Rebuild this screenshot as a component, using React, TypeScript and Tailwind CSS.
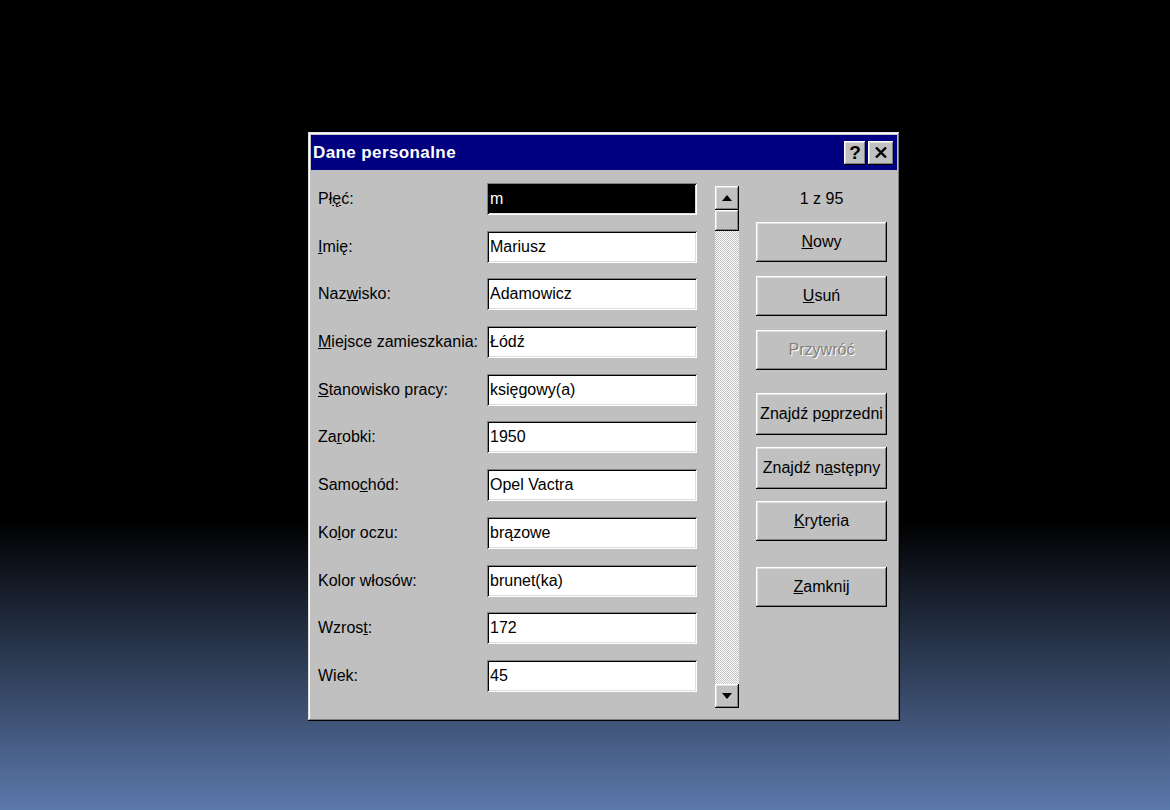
import React from "react";

const FONT = "font-['Liberation_Sans',Arial,sans-serif]";
const RAISED =
  "shadow-[inset_-1px_-1px_#000,inset_1px_1px_#fff,inset_-2px_-2px_#808080,inset_2px_2px_#dfdfdf]";
const SUNKEN =
  "shadow-[inset_1px_1px_#808080,inset_-1px_-1px_#fff,inset_2px_2px_#000,inset_-2px_-2px_#dfdfdf]";

type Row = { label: React.ReactNode; value: string; selected?: boolean };

const ROWS: Row[] = [
  { label: <>Pł<u>ę</u>ć:</>, value: "m", selected: true },
  { label: <><u>I</u>mię:</>, value: "Mariusz" },
  { label: <>Naz<u>w</u>isko:</>, value: "Adamowicz" },
  { label: <><u>M</u>iejsce zamieszkania:</>, value: "Łódź" },
  { label: <><u>S</u>tanowisko pracy:</>, value: "księgowy(a)" },
  { label: <>Za<u>r</u>obki:</>, value: "1950" },
  { label: <>Samo<u>c</u>hód:</>, value: "Opel Vactra" },
  { label: <>Ko<u>l</u>or oczu:</>, value: "brązowe" },
  { label: <>Kolor włosów:</>, value: "brunet(ka)" },
  { label: <>Wzros<u>t</u>:</>, value: "172" },
  { label: <>Wiek:</>, value: "45" },
];

function Btn({ children, className = "", disabled = false }: { children: React.ReactNode; className?: string; disabled?: boolean }) {
  return (
    <div
      className={`h-[40px] w-[131px] bg-[#c0c0c0] ${RAISED} flex items-center justify-center whitespace-nowrap text-[16px] ${
        disabled ? "text-[#808080] [text-shadow:1px_1px_0_#fff]" : "text-black"
      } ${className}`}
    >
      {children}
    </div>
  );
}

function Arrow({ up }: { up?: boolean }) {
  return (
    <div className={`h-[24px] w-[24px] bg-[#c0c0c0] ${RAISED} flex items-center justify-center`}>
      <svg width="10" height="6" viewBox="0 0 10 6">
        {up ? <polygon points="5,0 10,6 0,6" fill="#000" /> : <polygon points="0,0 10,0 5,6" fill="#000" />}
      </svg>
    </div>
  );
}

export default function App() {
  return (
    <div className={`min-h-[810px] w-full bg-[linear-gradient(to_bottom,#000_0px,#000_520px,#5c79ac_810px)] pt-[132px] pl-[308px] ${FONT}`}>
      <div className={`w-[592px] h-[589px] bg-[#c0c0c0] p-[3px] flex flex-col shadow-[inset_-1px_-1px_#000,inset_1px_1px_#dfdfdf,inset_-2px_-2px_#808080,inset_2px_2px_#fff]`}>
        {/* Title bar */}
        <div className="h-[35px] bg-[#000080] flex items-center justify-between pl-[2px] pr-[3px]">
          <span className="text-white font-bold text-[17px] tracking-[0.4px]">Dane personalne</span>
          <div className="flex gap-[2px]">
            <div className={`h-[24px] w-[22px] bg-[#c0c0c0] ${RAISED} flex items-center justify-center text-[19px] font-bold leading-none text-black`}>?</div>
            <div className={`h-[24px] w-[26px] bg-[#c0c0c0] ${RAISED} flex items-center justify-center`}>
              <svg width="12" height="11" viewBox="0 0 12 11">
                <path d="M1 0.5 L11 10.5 M11 0.5 L1 10.5" stroke="#000" strokeWidth="2.4" />
              </svg>
            </div>
          </div>
        </div>

        {/* Body */}
        <div className="flex items-start pt-[13px] pl-[7px]">
          <div className="grid grid-cols-[169px_210px] auto-rows-[32px] gap-y-[15.7px]">
            {ROWS.map((r, i) => (
              <React.Fragment key={i}>
                <div className="h-[32px] flex items-center text-[16px] text-black whitespace-nowrap">{r.label}</div>
                <div className={`h-[32px] ${SUNKEN} p-[2px]`}>
                  <div
                    className={`h-full flex items-center pl-[1px] text-[16px] ${
                      r.selected ? "bg-black text-white" : "bg-white text-black"
                    }`}
                  >
                    {r.value}
                  </div>
                </div>
              </React.Fragment>
            ))}
          </div>

          {/* Scrollbar */}
          <div className="ml-[18px] mt-[3px] w-[24px] h-[522px] flex flex-col bg-[repeating-conic-gradient(#c0c0c0_0%_25%,#fff_0%_50%)] bg-[length:2px_2px]">
            <Arrow up />
            <div className={`h-[21px] w-[24px] bg-[#c0c0c0] ${RAISED}`} />
            <div className="flex-1" />
            <Arrow />
          </div>

          {/* Buttons */}
          <div className="ml-[17px] flex flex-col items-center">
            <div className="h-[30px] mt-[1px] flex items-center text-[16px] text-black">1 z 95</div>
            <Btn className="mt-[8px]"><span><u>N</u>owy</span></Btn>
            <Btn className="mt-[14px]"><span><u>U</u>suń</span></Btn>
            <Btn className="mt-[14px]" disabled>Przywróć</Btn>
            <Btn className="mt-[23px] h-[42px]"><span>Znajdź p<u>o</u>przedni</span></Btn>
            <Btn className="mt-[12px] h-[42px]"><span>Znajdź n<u>a</u>stępny</span></Btn>
            <Btn className="mt-[12px]"><span><u>K</u>ryteria</span></Btn>
            <Btn className="mt-[26px]"><span><u>Z</u>amknij</span></Btn>
          </div>
        </div>
      </div>
    </div>
  );
}
